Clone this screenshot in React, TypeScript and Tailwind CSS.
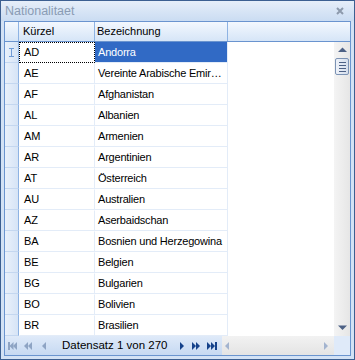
import React from "react";

const rows: [string, string][] = [
  ["AD", "Andorra"],
  ["AE", "Vereinte Arabische Emirate"],
  ["AF", "Afghanistan"],
  ["AL", "Albanien"],
  ["AM", "Armenien"],
  ["AR", "Argentinien"],
  ["AT", "Österreich"],
  ["AU", "Australien"],
  ["AZ", "Aserbaidschan"],
  ["BA", "Bosnien und Herzegowina"],
  ["BE", "Belgien"],
  ["BG", "Bulgarien"],
  ["BO", "Bolivien"],
  ["BR", "Brasilien"],
];

const Tri = ({ dir, color }: { dir: "l" | "r" | "u" | "d"; color: string }) => {
  const pts =
    dir === "l" ? "5,0 5,8 1,4" : dir === "r" ? "1,0 1,8 5,4" : dir === "u" ? "0,5 9,5 4.5,0.5" : "0,0.5 9,0.5 4.5,5";
  const w = dir === "l" || dir === "r" ? 6 : 9;
  const h = dir === "l" || dir === "r" ? 8 : 6;
  return (
    <svg width={w} height={h} viewBox={`0 0 ${w} ${h}`} className="block">
      <polygon points={pts} fill={color} />
    </svg>
  );
};

const NavIcon = ({ kind, color }: { kind: string; color: string }) => {
  let content: React.ReactNode = null;
  let w = 10;
  if (kind === "first") {
    w = 9;
    content = (
      <>
        <rect x="0" y="0" width="2" height="8" fill={color} />
        <polygon points="5.5,0 5.5,8 1.5,4" fill={color} />
        <polygon points="9,0 9,8 5,4" fill={color} />
      </>
    );
  }
  if (kind === "prevp") {
    w = 8;
    content = (
      <>
        <polygon points="4,0 4,8 0,4" fill={color} />
        <polygon points="8,0 8,8 4,4" fill={color} />
      </>
    );
  }
  if (kind === "prev") {
    w = 4;
    content = <polygon points="4,0 4,8 0,4" fill={color} />;
  }
  if (kind === "next") {
    w = 4;
    content = <polygon points="0,0 0,8 4,4" fill={color} />;
  }
  if (kind === "nextp") {
    w = 8;
    content = (
      <>
        <polygon points="0,0 0,8 4,4" fill={color} />
        <polygon points="4,0 4,8 8,4" fill={color} />
      </>
    );
  }
  if (kind === "last") {
    w = 10;
    content = (
      <>
        <polygon points="0,0 0,8 4,4" fill={color} />
        <polygon points="4,0 4,8 8,4" fill={color} />
        <rect x="8" y="0" width="2" height="8" fill={color} />
      </>
    );
  }
  return (
    <svg width={w} height="8" viewBox={`0 0 ${w} 8`} className="block shrink-0">
      {content}
    </svg>
  );
};

export default function App() {
  const font = { fontFamily: "'Liberation Sans', Arial, sans-serif" };
  return (
    <div
      className="w-[355px] h-[360px] border border-[#3c5f91] bg-[#d3e2f5] flex flex-col text-[11px] text-black overflow-hidden"
      style={font}
    >
      {/* title bar */}
      <div className="h-[20px] flex items-center justify-between pl-[4px] pr-[10px] bg-gradient-to-b from-[#e6eef9] to-[#cadcf2] shrink-0">
        <span className="text-[12.5px] text-[#8a9cb4] leading-none">Nationalitaet</span>
        <svg width="8" height="8" viewBox="0 0 8 8" className="block">
          <path d="M1 1 L7 7 M7 1 L1 7" stroke="#8d9aac" strokeWidth="2" />
        </svg>
      </div>
      {/* body */}
      <div className="flex-1 min-h-0 flex flex-col px-[3px] pb-[3px] bg-[#d3e2f5]">
        <div className="flex-1 min-h-0 flex flex-col border border-[#6a94cf] bg-white overflow-hidden">
          {/* header */}
          <div className="flex h-[20px] shrink-0 bg-gradient-to-b from-[#f3f8fe] to-[#d6e5f7] border-b border-[#6a94cf]">
            <div className="w-[14px] border-r border-[#8eb3e3]" />
            <div className="w-[76px] border-r border-[#8eb3e3] flex items-center pl-[4px]">Kürzel</div>
            <div className="w-[133px] border-r border-[#8eb3e3] flex items-center pl-[2px]">Bezeichnung</div>
            <div className="flex-1" />
          </div>
          <div className="flex-1 min-h-0 flex">
            {/* grid rows */}
            <div className="flex-1 flex flex-col min-w-0">
              {rows.map(([k, b], i) => (
                <div key={k} className="flex h-[21px] shrink-0">
                  <div className="w-[14px] shrink-0 bg-gradient-to-r from-[#eaf1fb] to-[#d6e4f6] border-r border-[#8eb3e3] border-b border-b-[#c4d7f0] flex items-center justify-center">
                    {i === 0 && (
                      <svg width="5" height="9" viewBox="0 0 5 9" className="block">
                        <path d="M0 0.5 H5 M0 8.5 H5 M2.5 0.5 V8.5" stroke="#6f9bd6" strokeWidth="1" fill="none" />
                      </svg>
                    )}
                  </div>
                  <div
                    className={`w-[76px] shrink-0 pl-[4px] leading-[19px] border ${
                      i === 0 ? "border-dotted border-black" : "border-transparent border-r-[#e3ecf8] border-b-[#e3ecf8]"
                    }`}
                  >
                    {k}
                  </div>
                  <div
                    className={`w-[133px] shrink-0 pl-[3px] pr-[2px] leading-[20px] tracking-[-0.2px] border-r border-b border-[#e3ecf8] whitespace-nowrap overflow-hidden text-ellipsis ${
                      i === 0 ? "bg-[#316ac5] text-white" : ""
                    }`}
                  >
                    {b}
                  </div>
                  <div className="flex-1" />
                </div>
              ))}
            </div>
            {/* vertical scrollbar */}
            <div className="w-[16px] shrink-0 bg-gradient-to-r from-[#f4f4f4] to-[#e6e6e6] flex flex-col items-center">
              <div className="h-[16px] flex items-center justify-center">
                <Tri dir="u" color="#4d6185" />
              </div>
              <div className="w-[14px] h-[17px] border border-[#7c93b5] rounded-[2px] bg-gradient-to-r from-[#eef2f9] to-[#d5deec] flex flex-col items-center justify-center gap-[2px]">
                <div className="w-[7px] h-[1px] bg-[#4d6185]" />
                <div className="w-[7px] h-[1px] bg-[#4d6185]" />
                <div className="w-[7px] h-[1px] bg-[#4d6185]" />
                <div className="w-[7px] h-[1px] bg-[#4d6185]" />
              </div>
              <div className="flex-1" />
              <div className="h-[16px] flex items-center justify-center">
                <Tri dir="d" color="#4d6185" />
              </div>
            </div>
          </div>
          {/* bottom bar */}
          <div className="h-[19px] shrink-0 flex">
            <div className="w-[217px] shrink-0 flex items-center bg-gradient-to-b from-[#dfeaf9] to-[#c6d9f2] pl-[3px]">
              <NavIcon kind="first" color="#8ea4c4" />
              <div className="w-[7px]" />
              <NavIcon kind="prevp" color="#8ea4c4" />
              <div className="w-[10px]" />
              <NavIcon kind="prev" color="#8ea4c4" />
              <span className="ml-[16px] w-[118px] shrink-0 text-[11.5px] whitespace-nowrap">Datensatz 1 von 270</span>
              <NavIcon kind="next" color="#15428b" />
              <div className="w-[8px]" />
              <NavIcon kind="nextp" color="#15428b" />
              <div className="w-[7px]" />
              <NavIcon kind="last" color="#15428b" />
            </div>
            <div className="flex-1 flex items-center justify-between pl-[2px] pr-[5px] bg-gradient-to-b from-[#f2f2f2] to-[#e4e4e4]">
              <Tri dir="l" color="#a3b4cf" />
              <Tri dir="r" color="#a3b4cf" />
            </div>
            <div className="w-[16px] shrink-0 bg-[#dfeaf9]" />
          </div>
        </div>
      </div>
    </div>
  );
}
